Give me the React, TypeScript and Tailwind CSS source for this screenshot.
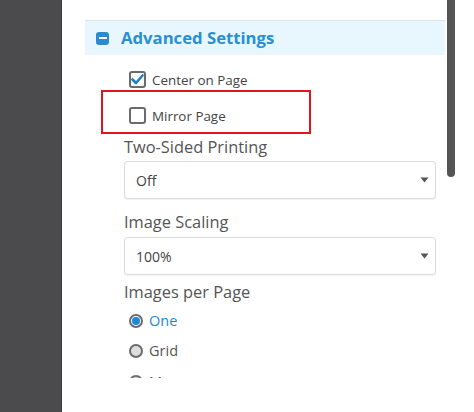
import React from "react";

function Caret() {
  return (
    <svg width="9" height="6" viewBox="0 0 9 6" className="absolute right-[6px] top-1/2 -translate-y-1/2">
      <path d="M0.5 0.5 L8.5 0.5 L4.5 5.5 Z" fill="#555" />
    </svg>
  );
}

function Select({ value }: { value: string }) {
  return (
    <div className="relative ml-[62px] w-[312px] h-[38px] border border-[#dcdcdc] rounded-[3px] bg-white flex items-center pl-[11px] text-[14px] text-[#444] shadow-[0_1px_1px_rgba(0,0,0,0.05)]">
      {value}
      <Caret />
    </div>
  );
}

function Checkbox({ checked }: { checked: boolean }) {
  return (
    <div className="w-[17px] h-[17px] border-2 border-[#6b6b6b] rounded-[3px] bg-white flex items-center justify-center shrink-0">
      {checked && (
        <svg width="13" height="11" viewBox="0 0 13 11">
          <path d="M1.5 5.5 L5 9 L11.5 1.5" fill="none" stroke="#1b7fcc" strokeWidth="2.6" strokeLinecap="round" strokeLinejoin="round" />
        </svg>
      )}
    </div>
  );
}

function Radio({ checked }: { checked: boolean }) {
  return (
    <div
      className={
        "w-[14px] h-[14px] rounded-full border-2 border-[#6b6b6b] flex items-center justify-center shrink-0 " +
        (checked ? "bg-white" : "bg-[#dedede]")
      }
    >
      {checked && <div className="w-[8px] h-[8px] rounded-full bg-[#1a8ad6]" />}
    </div>
  );
}

export default function App() {
  return (
    <div className="w-[474px] h-[412px] flex bg-white overflow-hidden" style={{ fontFamily: '"Open Sans", sans-serif' }}>
      <div className="w-[62px] h-full bg-[#4b4b4d] border-r border-[#3c3c3e] shrink-0" />
      <div className="w-[385px] h-[378px] overflow-hidden shrink-0">
        <div className="mt-[20px] ml-[23px] w-[360px] h-[35px] border-t border-[#dde4e8] bg-[#e8f7fd] flex items-center">
          <div className="ml-[11px] w-[13px] h-[13px] rounded-[3px] bg-[#2a8bd0] flex items-center justify-center">
            <div className="w-[8px] h-[2px] bg-white" />
          </div>
          <span className="ml-[12px] text-[16.7px] font-bold text-[#2a8fd0] leading-none">Advanced Settings</span>
        </div>
        <div className="mt-[16px] ml-[67px] h-[17px] flex items-center gap-[6px]">
          <Checkbox checked />
          <span className="text-[13.4px] text-[#444] leading-none translate-y-[1px]">Center on Page</span>
        </div>
        <div className="mt-[2px] ml-[39px] w-[210px] h-[44px] border-2 border-[#e0161f] pt-[15px] pl-[26px]">
          <div className="h-[17px] flex items-center gap-[6px]">
            <Checkbox checked={false} />
            <span className="text-[13.4px] text-[#444] leading-none translate-y-[1px]">Mirror Page</span>
          </div>
        </div>
        <div className="mt-[3px] ml-[62px] h-[20px] leading-[20px] text-[16.4px] text-[#555]">Two-Sided Printing</div>
        <div className="mt-[4px]">
          <Select value="Off" />
        </div>
        <div className="mt-[13px] ml-[62px] h-[20px] leading-[20px] text-[16.4px] text-[#555]">Image Scaling</div>
        <div className="mt-[5px]">
          <Select value="100%" />
        </div>
        <div className="mt-[7px] ml-[62px] h-[20px] leading-[20px] text-[16.4px] text-[#555]">Images per Page</div>
        <div className="mt-[12px] ml-[67px] h-[14px] flex items-center gap-[6px]">
          <Radio checked />
          <span className="text-[14.5px] text-[#1a8ad6] leading-none">One</span>
        </div>
        <div className="mt-[16px] ml-[67px] h-[14px] flex items-center gap-[6px]">
          <Radio checked={false} />
          <span className="text-[14.5px] text-[#555] leading-none">Grid</span>
        </div>
        <div className="mt-[17px] ml-[67px] h-[14px] flex items-center gap-[6px]">
          <Radio checked={false} />
          <span className="text-[14.5px] text-[#555] leading-none">Max</span>
        </div>
      </div>
      <div className="w-[8px] h-[177px] bg-[#555556] rounded-b-[4px] shrink-0" />
    </div>
  );
}
